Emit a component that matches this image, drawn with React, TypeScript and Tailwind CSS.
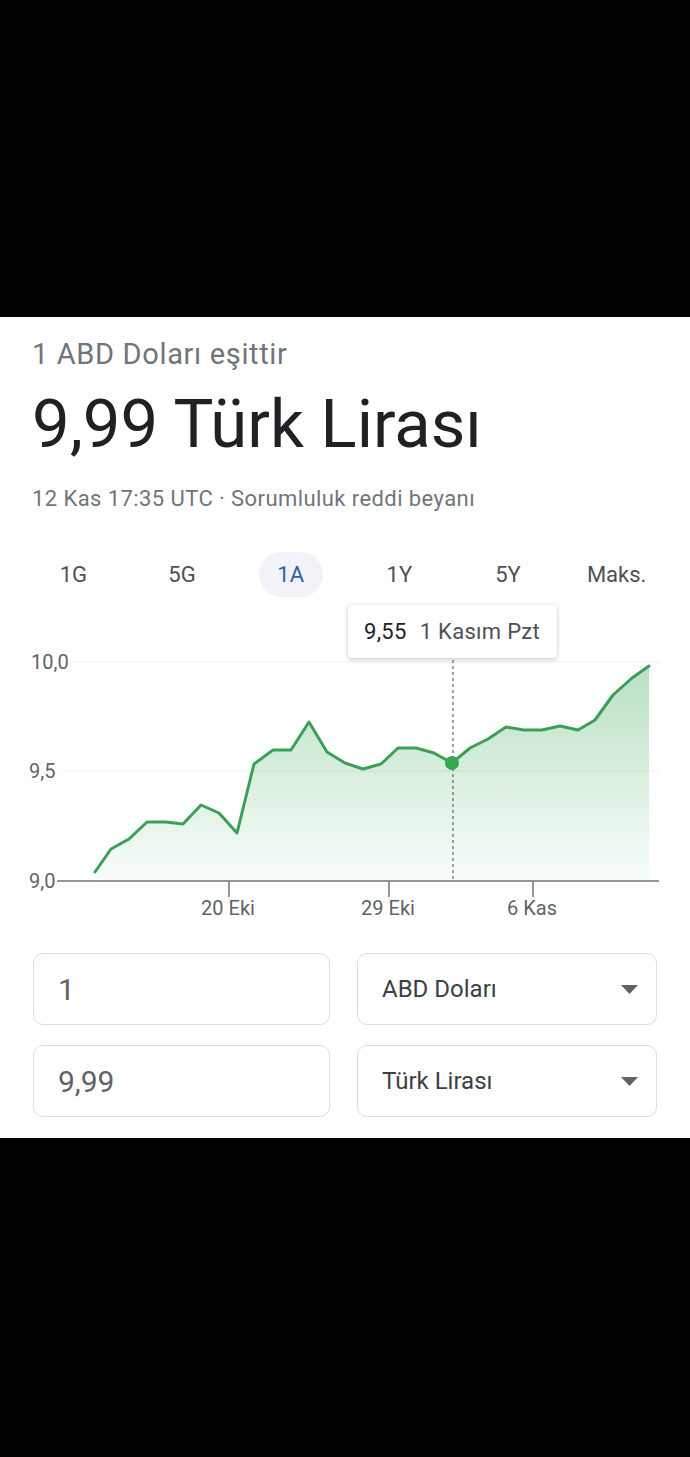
import React from "react";

const pts: [number, number][] = [
  [95, 872], [111, 849], [129, 839], [147, 822], [166, 822], [183, 824],
  [201, 805], [219, 813], [237, 833], [254, 764], [273, 750], [291, 750],
  [309, 722], [327, 752], [345, 763], [363, 769], [381, 764], [398, 748],
  [416, 748], [434, 753], [452, 763], [470, 748], [488, 739], [506, 727],
  [524, 730], [542, 730], [560, 726], [578, 730], [595, 720], [613, 695],
  [632, 678], [649, 666],
];

// chart svg starts at page y 597
const OFF = 597;

const Chart = () => {
  const line = pts.map(([x, y], i) => `${i ? "L" : "M"}${x} ${y - OFF}`).join(" ");
  const area = `${line} L649 ${881 - OFF} L95 ${881 - OFF} Z`;
  return (
    <div className="relative h-[340px] w-full">
      <svg width="690" height="340" viewBox="0 0 690 340" className="block">
        <defs>
          <linearGradient id="g" x1="0" y1="0" x2="0" y2="1">
            <stop offset="0%" stopColor="#34a853" stopOpacity="0.35" />
            <stop offset="100%" stopColor="#34a853" stopOpacity="0.03" />
          </linearGradient>
        </defs>
        <line x1="73" y1={662 - OFF} x2="659" y2={662 - OFF} stroke="#ededed" strokeWidth="1" />
        <line x1="62" y1={771 - OFF} x2="659" y2={771 - OFF} stroke="#ededed" strokeWidth="1" />
        <path d={area} fill="url(#g)" />
        <line x1="453" y1={660 - OFF} x2="453" y2={880 - OFF} stroke="#5f6368" strokeWidth="1.2" strokeDasharray="3 3" />
        <path d={line} fill="none" stroke="#3c9f58" strokeWidth="3" strokeLinejoin="round" strokeLinecap="round" />
        <circle cx="452" cy={763 - OFF} r="7" fill="#34a853" />
        <line x1="57" y1={881 - OFF} x2="659" y2={881 - OFF} stroke="#70757a" strokeWidth="1.5" />
        <line x1="229" y1={881 - OFF} x2="229" y2={897 - OFF} stroke="#70757a" strokeWidth="1.5" />
        <line x1="389" y1={881 - OFF} x2="389" y2={897 - OFF} stroke="#70757a" strokeWidth="1.5" />
        <line x1="533" y1={881 - OFF} x2="533" y2={897 - OFF} stroke="#70757a" strokeWidth="1.5" />
        <g fontFamily="Roboto, sans-serif" fontSize="20" fill="#5f6368">
          <text x="31" y={669 - OFF}>10,0</text>
          <text x="29" y={778 - OFF}>9,5</text>
          <text x="29" y={888 - OFF}>9,0</text>
          <text x="228" y={915 - OFF} textAnchor="middle">20 Eki</text>
          <text x="388" y={915 - OFF} textAnchor="middle">29 Eki</text>
          <text x="532" y={915 - OFF} textAnchor="middle">6 Kas</text>
        </g>
      </svg>
      <div className="absolute left-[348px] top-[8px] flex h-[53px] w-[209px] items-center gap-[13px] rounded-[4px] bg-white pl-[16px] text-[22px] tracking-[0.3px] shadow-[0_1px_4px_rgba(0,0,0,0.25)]">
        <span className="text-[#202124]">9,55</span>
        <span className="text-[#4d5156]">1 Kasım Pzt</span>
      </div>
    </div>
  );
};

const tabs = ["1G", "5G", "1A", "1Y", "5Y", "Maks."];

const Field = ({value, select}: {value: string; select?: boolean}) => (
  <div className="flex h-[72px] items-center justify-between rounded-[10px] border border-[#dadce0] pl-[24px] pr-[18px]">
    <span className={select ? "text-[24px] text-[#3c4043]" : "text-[30px] text-[#5f6368]"}>{value}</span>
    {select && (
      <svg width="17" height="9" viewBox="0 0 17 9">
        <path d="M0 0 L17 0 L8.5 9 Z" fill="#5f6368" />
      </svg>
    )}
  </div>
);

const App = () => {
  return (
    <div className="flex min-h-[1457px] w-[690px] flex-col bg-black font-['Roboto',sans-serif]">
      <div className="h-[317px]" />
      <div className="flex flex-col bg-white pb-[21px]">
        <div className="px-[32px] pt-[19px]">
          <div className="text-[29px] leading-[36px] tracking-[0.65px] text-[#70757a]">1 ABD Doları eşittir</div>
          <div className="mt-[12px] text-[67px] leading-[80px] text-[#202124]">9,99 Türk Lirası</div>
          <div className="mt-[21px] text-[22px] leading-[28px] tracking-[0.42px] text-[#70757a]">12 Kas 17:35 UTC · Sorumluluk reddi beyanı</div>
        </div>
        <div className="mt-[39px] grid grid-cols-6 px-[19px]">
          {tabs.map((t) => (
            <div key={t} className="flex h-[45px] items-center justify-center">
              {t === "1A" ? (
                <span className="flex h-[45px] w-[64px] items-center justify-center rounded-full bg-[#f1f3f8] text-[22px] text-[#2f5fae]">{t}</span>
              ) : (
                <span className="text-[22px] text-[#4d5156]">{t}</span>
              )}
            </div>
          ))}
        </div>
        <Chart />
        <div className="mt-[16px] grid grid-cols-[297px_300px] gap-x-[27px] gap-y-[20px] px-[33px]">
          <Field value="1" />
          <Field value="ABD Doları" select />
          <Field value="9,99" />
          <Field value="Türk Lirası" select />
        </div>
      </div>
      <div className="flex-1" />
    </div>
  );
};

export default App;
